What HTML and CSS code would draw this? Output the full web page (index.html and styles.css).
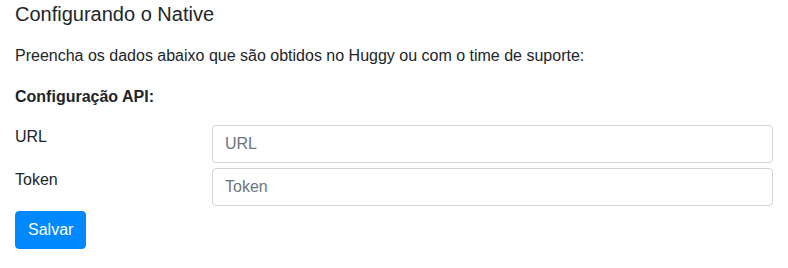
FILE: index.html
```html
<!DOCTYPE html>
<html lang="pt-BR">
<head>
  <meta charset="UTF-8" />
  <meta name="viewport" content="width=device-width, initial-scale=1.0" />
  <title>Configurando o Native</title>
  <link rel="stylesheet" href="styles.css">
</head>
<body>
  <div class="container">
    <h5 class="title">Configurando o Native</h5>
    <p class="intro">Preencha os dados abaixo que são obtidos no Huggy ou com o time de suporte:</p>

    <form class="config-form">
      <p class="section-title">Configuração API:</p>

      <div class="form-row">
        <label for="url" class="form-label">URL</label>
        <div class="form-field">
          <input type="text" id="url" class="form-control" placeholder="URL" />
        </div>
      </div>

      <div class="form-row">
        <label for="token" class="form-label">Token</label>
        <div class="form-field">
          <input type="text" id="token" class="form-control" placeholder="Token" />
        </div>
      </div>

      <button type="button" class="btn-primary">Salvar</button>
    </form>
  </div>
</body>
</html>
```

FILE: styles.css
```css
* {
  box-sizing: border-box;
}

body {
  margin: 0;
  background-color: #fff;
  color: #212529;
  font-family: "Liberation Sans", Arial, sans-serif;
  font-size: 16px;
  line-height: 1.5;
}

.container {
  padding: 2px 15px 0 15px;
}

.title {
  font-size: 20px;
  font-weight: 500;
  line-height: 1.2;
  margin: 0 0 18px 0;
}

.intro {
  margin: 0 0 17px 0;
}

.section-title {
  font-weight: bold;
  margin: 0 0 16px 0;
}

.form-row {
  display: flex;
  margin-bottom: 5px;
}

.form-label {
  width: 197px;
  padding-right: 15px;
  flex-shrink: 0;
}

.form-field {
  flex: 1;
}

.form-control {
  display: block;
  width: 100%;
  height: 38px;
  padding: 6px 12px;
  font-family: inherit;
  font-size: 16px;
  line-height: 1.5;
  color: #495057;
  background-color: #fff;
  border: 1px solid #ced4da;
  border-radius: 4px;
}

.form-control::placeholder {
  color: #6c757d;
}

.btn-primary {
  display: inline-block;
  height: 38px;
  padding: 6px 12px;
  font-family: inherit;
  font-size: 16px;
  line-height: 1.5;
  color: #fff;
  background-color: #0088ff;
  border: 1px solid #0088ff;
  border-radius: 4px;
  cursor: pointer;
}
```
